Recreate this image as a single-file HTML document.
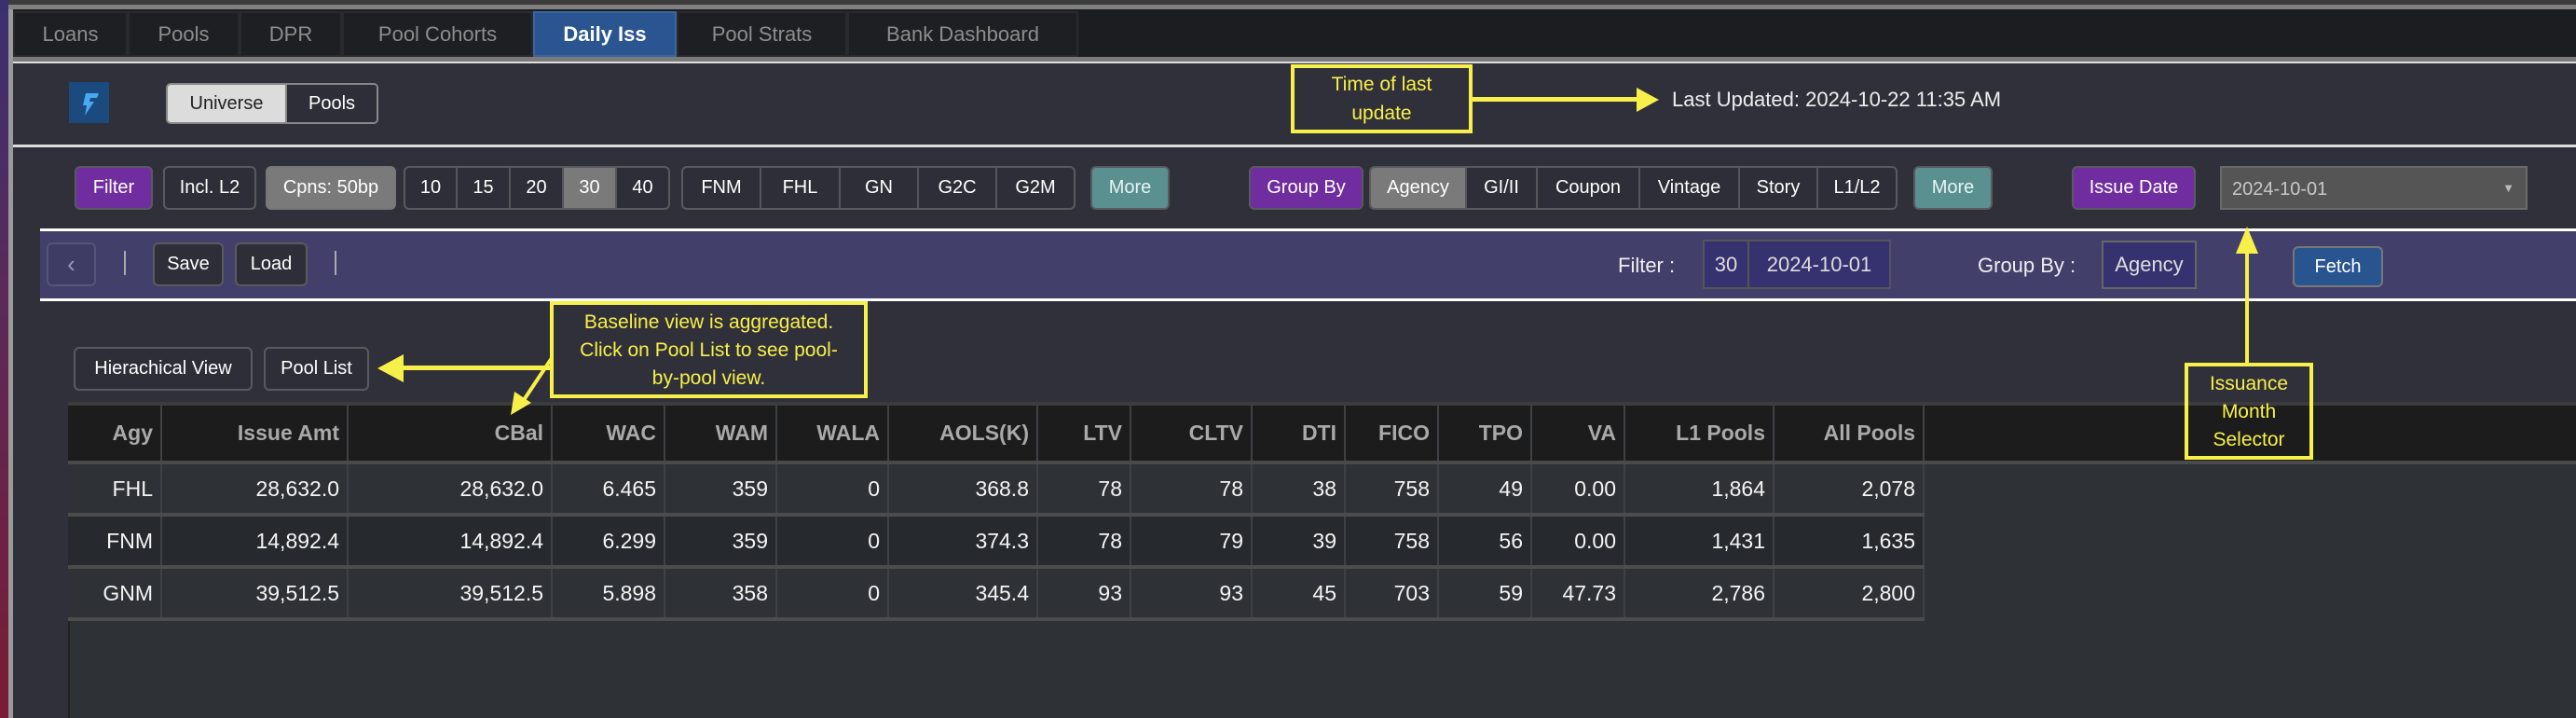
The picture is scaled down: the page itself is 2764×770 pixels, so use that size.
<!DOCTYPE html>
<html><head><meta charset="utf-8"><style>
*{box-sizing:border-box;margin:0;padding:0}
body{width:2764px;height:770px;background:#30303a;position:relative;overflow:hidden;font-family:"Liberation Sans",Arial,sans-serif}
.a{position:absolute}
.tab{position:absolute;top:12px;height:49px;background:#1e1f22;border:2px solid #2a2a2c;color:#8d8d8d;font-size:22px;display:flex;align-items:center;justify-content:center}
.btn{position:absolute;height:47px;border:2px solid #5a5a5e;border-radius:6px;color:#fff;font-size:20px;display:flex;align-items:center;justify-content:center;background:#2e2e38}
.grp{position:absolute;height:47px;border:2px solid #5a5a5e;border-radius:6px;display:flex;overflow:hidden;background:#2e2e38}
.grp div{height:100%;display:flex;align-items:center;justify-content:center;color:#fff;font-size:20px;border-right:2px solid #55555a}
.grp div:last-child{border-right:none}
.pur{background:#6f2d9f}
.teal{background:#5a9090;color:#e8f4f4}
.yb{position:absolute;border:4px solid #f8f04a;color:#f8f04a;background:#30303a;text-align:center;font-size:21px}
table{border-collapse:collapse;position:absolute;left:73px;top:431px;font-size:23px}
td,th{border-right:2px solid #3e4246;text-align:right;padding-right:8px;height:56px}
th{background:#1c1c1c;color:#a9a9a9;font-weight:bold;height:63px;border-bottom:4px solid #4a4a4a;border-top:4px solid #3c3c3c}
td{color:#f4f4f4;border-bottom:4px solid #4c4c4c}
tr.r1 td,tr.r3 td{background:#2e3236}
tr.r2 td{background:#262a2e}
</style></head><body>
<div class="a" style="left:0;top:0;width:2764px;height:6px;background:#3c3c3c"></div>
<div class="a" style="left:0;top:5px;width:2764px;height:5px;background:#808080"></div>
<div class="a" style="left:0;top:10px;width:2764px;height:52px;background:#1c1d20"></div>
<div class="a" style="left:0;top:61px;width:2764px;height:5px;background:#7a7a7a"></div>
<div class="a" style="left:0;top:0;width:9px;height:770px;background:linear-gradient(#3a3070,#5a2a5a 40%,#7a1c34)"></div>
<div class="a" style="left:9px;top:10px;width:5px;height:760px;background:#9a9a9a"></div>
<div class="a" style="left:14px;top:66px;width:2750px;height:2px;background:#ddd"></div>
<div class="tab" style="left:14px;width:123px">Loans</div>
<div class="tab" style="left:137px;width:120px">Pools</div>
<div class="tab" style="left:257px;width:110px">DPR</div>
<div class="tab" style="left:367px;width:205px">Pool Cohorts</div>
<div class="tab" style="left:572px;width:154px;background:#2a5590;color:#fff;font-weight:bold;border-color:#3a65a0">Daily Iss</div>
<div class="tab" style="left:726px;width:183px">Pool Strats</div>
<div class="tab" style="left:909px;width:248px">Bank Dashboard</div>
<div class="a" style="left:74px;top:88px;width:43px;height:44px;background:#1a4a7e"></div>
<svg class="a" style="left:74px;top:88px" width="43" height="44" viewBox="0 0 43 44"><path d="M18 12 L32 12 L30 17 L23 17 L22 21 L27 21 L17 36 L19 25 L15 25 Z" fill="#48a8f0"/></svg>
<div class="a" style="left:178px;top:89px;width:228px;height:44px;border:2px solid #888;border-radius:5px;display:flex;overflow:hidden">
<div style="width:126px;background:#dcdcdc;color:#222;font-size:20px;display:flex;align-items:center;justify-content:center">Universe</div>
<div style="flex:1;background:#2e2e38;color:#fff;font-size:20px;display:flex;align-items:center;justify-content:center;border-left:2px solid #888">Pools</div></div>
<div class="yb" style="left:1385px;top:69px;width:195px;height:74px;line-height:31px;padding-top:2px">Time of last<br>update</div>
<div class="a" style="left:1580px;top:104px;width:180px;height:5px;background:#f8f04a"></div>
<svg class="a" style="left:1756px;top:94px" width="26" height="26"><path d="M0 0 L24 13 L0 26 Z" fill="#f8f04a"/></svg>
<div class="a" style="left:1794px;top:94px;color:#eee;font-size:22px">Last Updated: 2024-10-22 11:35 AM</div>
<div class="a" style="left:14px;top:155px;width:2750px;height:3px;background:#ddd"></div>
<div class="btn pur" style="left:80px;top:178px;width:84px">Filter</div>
<div class="btn" style="left:175px;top:178px;width:100px">Incl. L2</div>
<div class="btn" style="left:285px;top:178px;width:140px;background:#7a7a7a;border-color:#777">Cpns: 50bp</div>
<div class="grp" style="left:433px;top:178px;width:286px"><div style="width:56px">10</div><div style="width:57px">15</div><div style="width:57px">20</div><div style="width:57px;background:#7a7a7a">30</div><div style="flex:1">40</div></div>
<div class="grp" style="left:731px;top:178px;width:423px"><div style="width:84px">FNM</div><div style="width:85px">FHL</div><div style="width:84px">GN</div><div style="width:84px">G2C</div><div style="flex:1">G2M</div></div>
<div class="btn teal" style="left:1170px;top:178px;width:85px">More</div>
<div class="btn pur" style="left:1340px;top:178px;width:123px">Group By</div>
<div class="grp" style="left:1469px;top:178px;width:567px"><div style="width:103px;background:#7a7a7a">Agency</div><div style="width:76px">GI/II</div><div style="width:110px">Coupon</div><div style="width:107px">Vintage</div><div style="width:84px">Story</div><div style="flex:1">L1/L2</div></div>
<div class="btn teal" style="left:2053px;top:178px;width:85px">More</div>
<div class="btn pur" style="left:2223px;top:178px;width:133px">Issue Date</div>
<div class="a" style="left:2382px;top:178px;width:330px;height:47px;background:#555;border:2px solid #6a6a6a;color:#c8c8c8;font-size:20px;padding:12px 0 0 11px">2024-10-01<span style="position:absolute;right:12px;top:14px;font-size:13px;color:#bbb">▼</span></div>
<div class="a" style="left:43px;top:245px;width:2721px;height:78px;background:#42406a;border-top:3px solid #fff;border-bottom:3px solid #fff"></div>
<div class="btn" style="left:50px;top:260px;width:53px;background:#3e3c64;border-color:#55547a;color:#9a98b8;font-size:26px">&#8249;</div>
<div class="a" style="left:133px;top:269px;width:2px;height:26px;background:#aaa"></div>
<div class="btn" style="left:164px;top:260px;width:76px">Save</div>
<div class="btn" style="left:252px;top:260px;width:78px">Load</div>
<div class="a" style="left:359px;top:269px;width:2px;height:26px;background:#aaa"></div>
<div class="a" style="left:1736px;top:272px;color:#eee;font-size:22px">Filter :</div>
<div class="a" style="left:1827px;top:257px;width:202px;height:53px;border:2px solid #555;background:#363270;display:flex;color:#ddd;font-size:22px"><div style="width:48px;border-right:2px solid #555;display:flex;align-items:center;justify-content:center">30</div><div style="flex:1;display:flex;align-items:center;justify-content:center">2024-10-01</div></div>
<div class="a" style="left:2122px;top:272px;color:#eee;font-size:22px">Group By :</div>
<div class="a" style="left:2255px;top:258px;width:102px;height:52px;border:2px solid #666;background:#363270;color:#ddd;font-size:22px;display:flex;align-items:center;justify-content:center">Agency</div>
<div class="btn" style="left:2460px;top:264px;width:97px;height:44px;background:#285490;border-color:#777">Fetch</div>
<div class="btn" style="left:79px;top:372px;width:192px">Hierachical View</div>
<div class="btn" style="left:283px;top:372px;width:113px">Pool List</div>
<div class="a" style="left:73px;top:431px;width:2691px;height:339px;background:#2e3236;border-left:2px solid #222"></div>
<div class="a" style="left:73px;top:431px;width:2691px;height:4px;background:#3c3c3c"></div>
<div class="a" style="left:2064px;top:435px;width:700px;height:63px;background:#1c1c1c;border-bottom:4px solid #4a4a4a"></div>
<table>
<tr><th style="width:100px">Agy</th><th style="width:200px">Issue Amt</th><th style="width:219px">CBal</th><th style="width:121px">WAC</th><th style="width:120px">WAM</th><th style="width:120px">WALA</th><th style="width:160px">AOLS(K)</th><th style="width:100px">LTV</th><th style="width:130px">CLTV</th><th style="width:100px">DTI</th><th style="width:100px">FICO</th><th style="width:100px">TPO</th><th style="width:100px">VA</th><th style="width:160px">L1 Pools</th><th style="width:161px">All Pools</th></tr>
<tr class="r1"><td>FHL</td><td>28,632.0</td><td>28,632.0</td><td>6.465</td><td>359</td><td>0</td><td>368.8</td><td>78</td><td>78</td><td>38</td><td>758</td><td>49</td><td>0.00</td><td>1,864</td><td>2,078</td></tr>
<tr class="r2"><td>FNM</td><td>14,892.4</td><td>14,892.4</td><td>6.299</td><td>359</td><td>0</td><td>374.3</td><td>78</td><td>79</td><td>39</td><td>758</td><td>56</td><td>0.00</td><td>1,431</td><td>1,635</td></tr>
<tr class="r3"><td>GNM</td><td>39,512.5</td><td>39,512.5</td><td>5.898</td><td>358</td><td>0</td><td>345.4</td><td>93</td><td>93</td><td>45</td><td>703</td><td>59</td><td>47.73</td><td>2,786</td><td>2,800</td></tr>
</table>
<div class="a" style="left:2409px;top:270px;width:4px;height:120px;background:#f8f04a"></div>
<svg class="a" style="left:2399px;top:243px" width="24" height="30"><path d="M12 0 L24 29 L0 29 Z" fill="#f8f04a"/></svg>
<div class="yb" style="left:2344px;top:389px;width:138px;height:104px;line-height:30px;padding-top:4px;font-size:21px;background:transparent">Issuance<br>Month<br>Selector</div>
<div class="yb" style="left:590px;top:323px;width:341px;height:104px;line-height:30px;padding-top:4px;font-size:21px">Baseline view is aggregated.<br>Click on Pool List to see pool-<br>by-pool view.</div>
<div class="a" style="left:425px;top:392px;width:166px;height:5px;background:#f8f04a"></div>
<svg class="a" style="left:405px;top:380px" width="30" height="30"><path d="M0 15 L28 0 L28 30 Z" fill="#f8f04a"/></svg>
<svg class="a" style="left:540px;top:380px" width="60" height="70"><path d="M52 4 L20 52" stroke="#f8f04a" stroke-width="4"/><path d="M8 65 L12 40 L30 52 Z" fill="#f8f04a"/></svg>
</body></html>
